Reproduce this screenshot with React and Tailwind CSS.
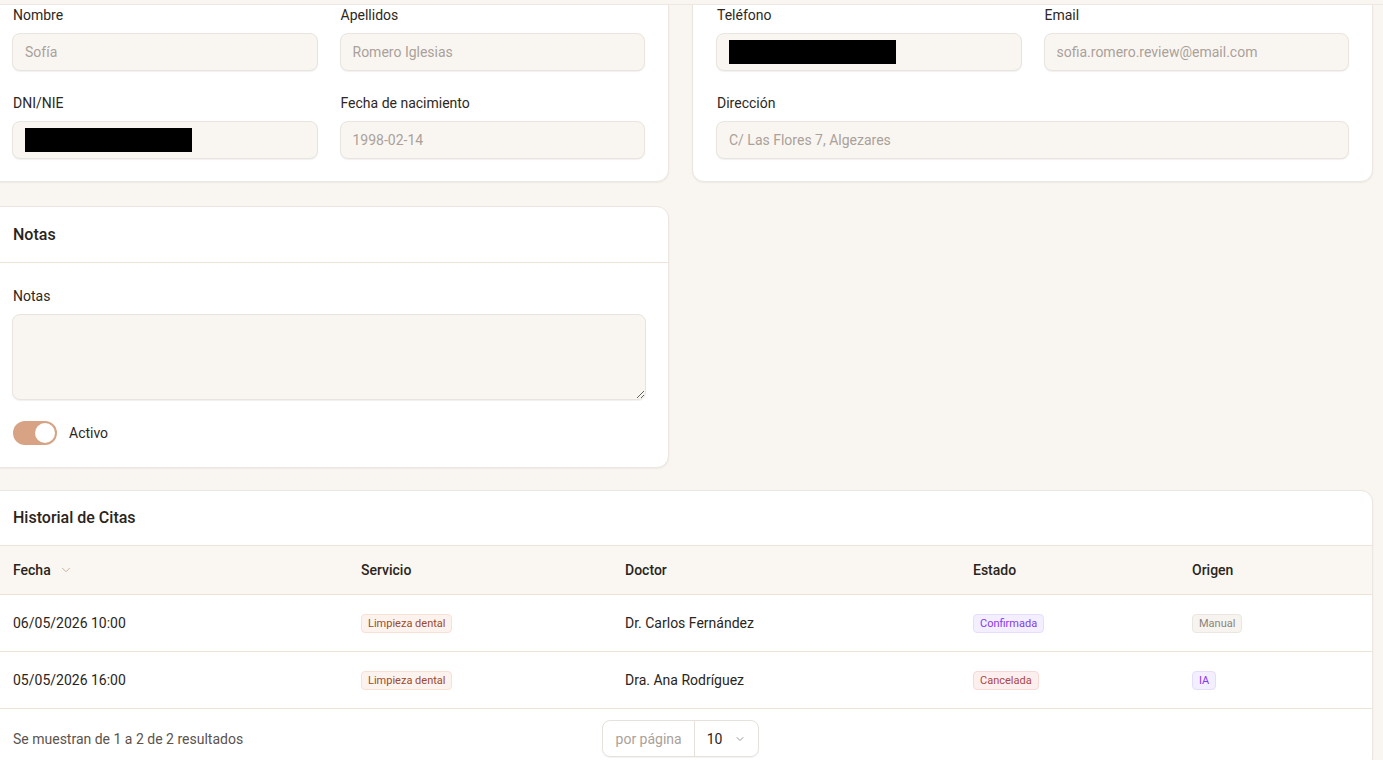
import React from 'react';
import { ChevronDown } from 'lucide-react';

const font = { fontFamily: 'Roboto, "Liberation Sans", sans-serif' };

function Field({ label, value, redacted, className = '' }) {
  return (
    <div className={`flex flex-col gap-2 ${className}`}>
      <label className="text-sm leading-5 text-[#2d2723] pl-px">{label}</label>
      <div className="h-[38px] rounded-lg border border-[#e9e4dd] bg-[#f9f6f2] px-3 flex items-center text-sm text-[#aaa199] shadow-[0_1px_1px_rgba(0,0,0,0.06)]">
        {redacted ? <div className="h-6 w-[167px] bg-black" /> : value}
      </div>
    </div>
  );
}

function Badge({ children, tone }) {
  const tones = {
    service: 'bg-[#fdf3ee] border-[#f7e0d4] text-[#9c4a2a]',
    purple: 'bg-[#f3efff] border-[#e6ddfd] text-[#8538f0]',
    red: 'bg-[#fdefee] border-[#f7d9d6] text-[#a94848]',
    gray: 'bg-[#f7f4ef] border-[#ebe6df] text-[#8a847e]',
  };
  return (
    <span className={`inline-flex items-center h-[19px] px-[6px] rounded border text-[11px] leading-none ${tones[tone]}`}>
      {children}
    </span>
  );
}

const rows = [
  { fecha: '06/05/2026 10:00', servicio: 'Limpieza dental', doctor: 'Dr. Carlos Fernández', estado: ['Confirmada', 'purple'], origen: ['Manual', 'gray'] },
  { fecha: '05/05/2026 16:00', servicio: 'Limpieza dental', doctor: 'Dra. Ana Rodríguez', estado: ['Cancelada', 'red'], origen: ['IA', 'purple'] },
];

const card = 'bg-white rounded-xl border border-[#ebe6df] shadow-[0_1px_2px_rgba(0,0,0,0.05)]';

export default function App() {
  return (
    <div className="min-h-screen bg-[#f9f6f1] overflow-hidden" style={font}>
      <div className="sticky top-0 z-10 h-[5px] bg-[#f9f6f1] border-b border-[#ede8e1]" />
      <div className="ml-[-12px] w-[1385px] flex flex-col gap-6 mt-[-35px]">
        <div className="grid grid-cols-2 gap-x-[23px]">
          <div className={`${card} px-[23px] pt-[34px] pb-[22px] grid grid-cols-2 gap-x-[22px] gap-y-[22px]`}>
            <Field label="Nombre" value="Sofía" />
            <Field label="Apellidos" value="Romero Iglesias" />
            <Field label="DNI/NIE" redacted />
            <Field label="Fecha de nacimiento" value="1998-02-14" />
          </div>
          <div className={`${card} px-[23px] pt-[34px] pb-[22px] grid grid-cols-2 gap-x-[22px] gap-y-[22px]`}>
            <Field label="Teléfono" redacted />
            <Field label="Email" value="sofia.romero.review@email.com" />
            <Field label="Dirección" value="C/ Las Flores 7, Algezares" className="col-span-2" />
          </div>
        </div>

        <div className="grid grid-cols-2 gap-x-[23px]">
          <div className={card}>
            <div className="h-[56px] px-6 flex items-center border-b border-[#efe3d7]">
              <h2 className="text-base font-medium text-[#2a2420]">Notas</h2>
            </div>
            <div className="pl-6 pr-[22px] pt-[23px] pb-[22px] flex flex-col">
              <label className="text-sm leading-5 text-[#2d2723]">Notas</label>
              <textarea
                className="mt-2 -ml-px h-[86px] rounded-lg border border-[#e9e4dd] bg-[#f9f6f2] shadow-[0_1px_1px_rgba(0,0,0,0.06)] outline-none"
                readOnly
              />
              <div className="mt-[21px] flex items-center gap-3">
                <div className="w-11 h-6 rounded-full bg-[#d7a384] flex items-center justify-end px-[2px]">
                  <div className="w-5 h-5 rounded-full bg-white" />
                </div>
                <span className="text-sm text-[#2d2723]">Activo</span>
              </div>
            </div>
          </div>
          <div />
        </div>

        <div className={`${card} mb-10 -mt-[2px]`}>
          <div className="h-[55px] px-6 flex items-center border-b border-[#efe3d7]">
            <h2 className="text-base font-medium text-[#2a2420]">Historial de Citas</h2>
          </div>
          <table className="w-full text-sm text-left">
            <thead>
              <tr className="bg-[#faf7f2] border-b border-[#efe3d7] h-[48px]">
                <th className="w-[348px] pl-6 font-medium text-[#2a2420]">
                  <span className="inline-flex items-center gap-2">
                    Fecha <ChevronDown size={14} className="text-[#b9a995]" strokeWidth={1.5} />
                  </span>
                </th>
                <th className="w-[264px] pl-6 font-medium text-[#2a2420]">Servicio</th>
                <th className="w-[348px] pl-6 font-medium text-[#2a2420]">Doctor</th>
                <th className="w-[219px] pl-6 font-medium text-[#2a2420]">Estado</th>
                <th className="pl-6 font-medium text-[#2a2420]">Origen</th>
              </tr>
            </thead>
            <tbody>
              {rows.map((r) => (
                <tr key={r.fecha} className="border-b border-[#efe3d7] h-[57px] text-[#2a2420]">
                  <td className="pl-6">{r.fecha}</td>
                  <td className="pl-6"><Badge tone="service">{r.servicio}</Badge></td>
                  <td className="pl-6">{r.doctor}</td>
                  <td className="pl-6"><Badge tone={r.estado[1]}>{r.estado[0]}</Badge></td>
                  <td className="pl-6"><Badge tone={r.origen[1]}>{r.origen[0]}</Badge></td>
                </tr>
              ))}
            </tbody>
          </table>
          <div className="h-[60px] px-6 grid grid-cols-3 items-center">
            <span className="text-sm text-[#5b534d]">Se muestran de 1 a 2 de 2 resultados</span>
            <div className="flex justify-center">
              <div className="flex h-[37px] rounded-lg border border-[#e6e1da] shadow-[0_1px_1px_rgba(0,0,0,0.05)] text-sm">
                <span className="pl-[13px] pr-3 flex items-center text-[#aaa199] border-r border-[#e6e1da]">por página</span>
                <span className="px-3 flex items-center gap-3 text-[#2a2420]">
                  10 <ChevronDown size={12} className="text-[#7c746d]" strokeWidth={1.5} />
                </span>
              </div>
            </div>
            <div />
          </div>
        </div>
      </div>
    </div>
  );
}
